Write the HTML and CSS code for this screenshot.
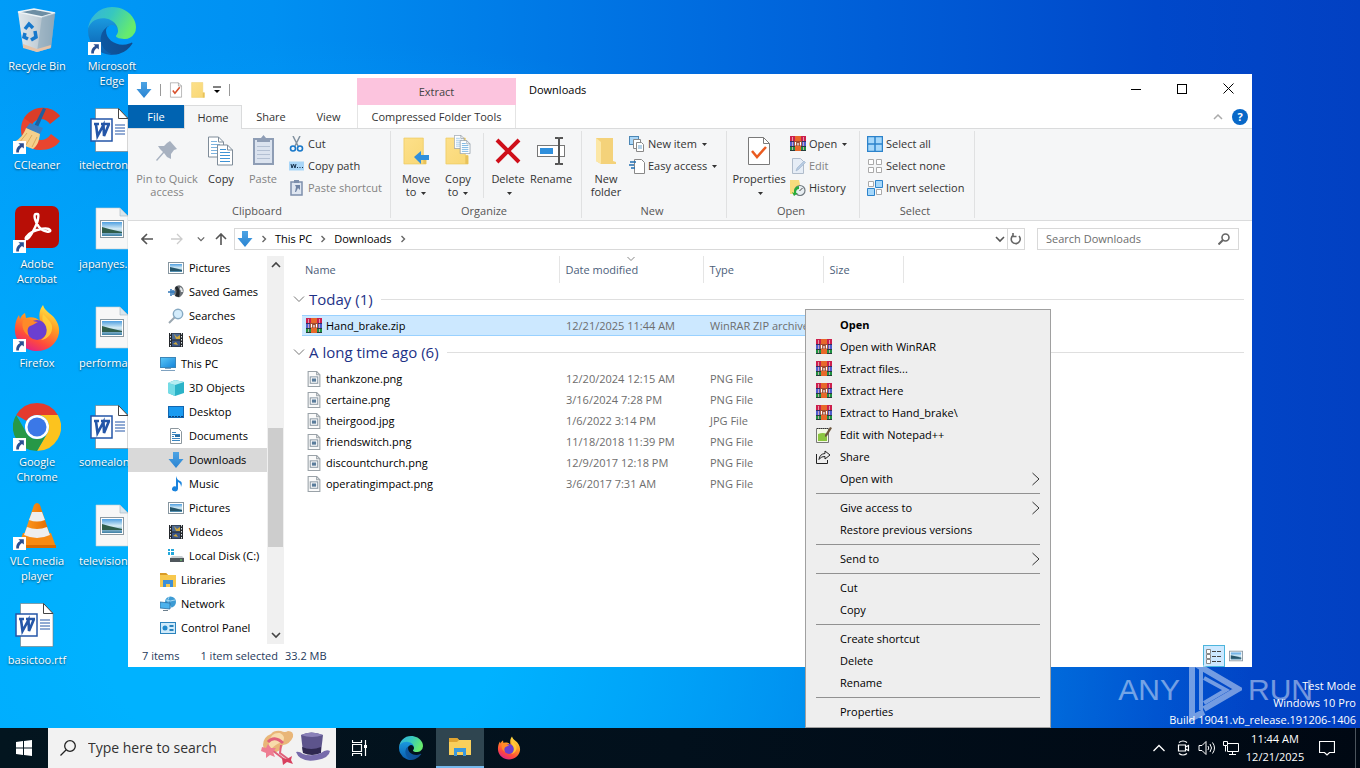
FILE: index.html
```html
<!DOCTYPE html>
<html lang="en">

<head>
    <title>Downloads</title>
    <meta charset="utf-8" />
    <meta name="viewport" content="width=device-width,initial-scale=1" />
    <link rel="stylesheet" href="styles.css">
</head>

<body>

    <!-- icon sprite -->
    <svg class="sprite" aria-hidden="true">
        <defs>
            <linearGradient id="gEdge1" x1="0" y1="0" x2="1" y2="0"><stop offset="0" stop-color="#0c59a4" /><stop offset="1" stop-color="#114a8b" /></linearGradient>
            <linearGradient id="gEdge2" x1="0" y1="0" x2="0" y2="1"><stop offset="0" stop-color="#1b9de2" /><stop offset="1" stop-color="#0a5cad" /></linearGradient>
            <linearGradient id="gEdge3" x1="0" y1="0" x2="1" y2="0.4"><stop offset="0" stop-color="#35b1e0" /><stop offset="0.5" stop-color="#36c7c0" /><stop offset="1" stop-color="#66eb6e" /></linearGradient>
            <linearGradient id="gFox" x1="0.8" y1="0" x2="0.3" y2="1"><stop offset="0" stop-color="#fff04a" /><stop offset="0.4" stop-color="#ff9a24" /><stop offset="0.75" stop-color="#ff4a3c" /><stop offset="1" stop-color="#e0208a" /></linearGradient>
            <linearGradient id="gFolder" x1="0" y1="0" x2="1" y2="1"><stop offset="0" stop-color="#fde08a" /><stop offset="1" stop-color="#f8d775" /></linearGradient>
            <linearGradient id="gSky" x1="0" y1="0" x2="0" y2="1"><stop offset="0" stop-color="#4f9fe0" /><stop offset="0.5" stop-color="#d8edf5" /><stop offset="1" stop-color="#3c7fa5" /></linearGradient>
            <linearGradient id="gScreen" x1="0" y1="0" x2="1" y2="1"><stop offset="0" stop-color="#5cc8f8" /><stop offset="1" stop-color="#1583d8" /></linearGradient>
            <linearGradient id="gBin" x1="0" y1="0" x2="1" y2="0"><stop offset="0" stop-color="#dfe7ec" /><stop offset="0.5" stop-color="#c5d0d8" /><stop offset="1" stop-color="#8fa7b8" /></linearGradient>
            <linearGradient id="gDown" x1="0" y1="0" x2="0" y2="1"><stop offset="0" stop-color="#4da3e4" /><stop offset="1" stop-color="#2a84d2" /></linearGradient>
            <linearGradient id="gCone" x1="0" y1="0" x2="1" y2="0"><stop offset="0" stop-color="#ff9a1f" /><stop offset="1" stop-color="#e36a00" /></linearGradient>
        </defs>

        <symbol id="shortcut" viewBox="0 0 12 12">
            <rect width="12" height="12" fill="#fff" />
            <path d="M5 2h5v5L8.300 5.500C6.500 6.700 5.500 8 5.400 10.500H3C2.600 7.500 4 5 6.600 3.800z" fill="#2a4f92" />
        </symbol>
        <symbol id="bin" viewBox="0 0 48 48">
            <path d="M5 5l16-3 21 4-4 35-14 4-14-5z" fill="url(#gBin)" />
            <path d="M5 5l16-3 21 4-13 4z" fill="#6d8ea4" stroke="#eef4f7" stroke-width="1.500" />
            <path d="M29 10l13-4-4 35-14 4z" fill="#8ca8ba" opacity=".6" />
            <path d="M10 37l14 5 14-4-.4 3L24 45 10 41z" fill="#e5c3a8" />
            <g fill="none" stroke="#1678cc" stroke-width="3.500"><path d="M12 22l4-5 4 4M22 24l1 6-5 3M15 32l-4-2 1-4" /></g>
        </symbol>
        <symbol id="edge" viewBox="0 0 256 256">
            <g transform="translate(-4.630 -4.920)">
                <path d="M235.680 195.090a93.730 93.730 0 0 1-10.540 4.710 101.870 101.870 0 0 1-35.900 6.460c-47.320 0-88.540-32.550-88.540-74.320a31.480 31.480 0 0 1 16.430-27.310c-42.800 1.800-53.800 46.400-53.800 72.530 0 73.880 68.090 81.370 82.760 81.370 7.910 0 19.840-2.300 27-4.560l1.310-.44a128.340 128.340 0 0 0 66.600-52.800 4 4 0 0 0-5.320-5.640z" fill="url(#gEdge1)" />
                <path d="M110.340 246.340A79.200 79.200 0 0 1 87.600 225a80.720 80.720 0 0 1 29.530-120c3.120-1.470 8.450-4.130 15.540-4a32.350 32.350 0 0 1 25.690 13 31.880 31.880 0 0 1 6.360 18.660c0-.21 24.460-79.600-80-79.600-43.900 0-80 41.660-80 78.210a130.150 130.150 0 0 0 12.110 56 128 128 0 0 0 156.380 67.110 75.550 75.550 0 0 1-62.780-8z" fill="url(#gEdge2)" />
                <path d="M156.940 153.780c-.81 1.050-3.300 2.500-3.300 5.660 0 2.610 1.700 5.120 4.720 7.230 14.380 10 41.490 8.680 41.560 8.680a59.560 59.560 0 0 0 30.270-8.350 61.380 61.380 0 0 0 30.430-52.880c.26-22.410-8-37.310-11.340-43.910C228.090 28.760 182.350 4.920 132.610 4.920A128 128 0 0 0 4.630 131.100c.48-36.540 36.800-66.050 80-66.050 3.500 0 23.460.34 42 10.070 16.340 8.580 24.900 18.940 30.850 29.210 6.180 10.670 7.280 24.150 7.280 29.520 0 5.370-2.740 13.330-7.820 19.930z" fill="url(#gEdge3)" />
            </g>
        </symbol>
        <symbol id="ccleaner" viewBox="0 0 48 48">
            <path d="M47 10C41 2 31 0 22 3 12 7 8 15 8 24c0 12 8 20 19 20 9 0 16-3 20-9l-9-7c-3 4-6 6-10 6-6 0-10-4-10-10s4-11 10-11c4 0 7 2 9 5z" fill="#e8452f" />
            <path d="M47 10C41 2 31 0 22 3c-5 2-8 5-11 9l8 6c2-3 5-5 9-5s7 2 9 5z" fill="#c8321f" opacity=".4" />
            <path d="M30 2l3 1-8 18-4-1z" fill="#1f5f9e" />
            <path d="M17 17l13 5-3 6-14-6z" fill="#3d7fc2" />
            <path d="M13 22l14 6c-1 8-3 12-7 15L1 36c6-3 10-8 12-14z" fill="#f5d08c" />
            <path d="M14 27L6 37M19 29l-6 10M24 31l-5 10" stroke="#dba95a" fill="none" />
        </symbol>
        <symbol id="acrobat" viewBox="0 0 48 48">
            <rect x="2" y="1" width="44" height="42" rx="7" fill="#b80e06" />
            <path d="M23 9c-3 0-1 8 3 13s13 6 11 3-12-1-18 2-8 8-5 7 10-14 11-20 0-5-2-5z" fill="none" stroke="#fff" stroke-width="2.400" />
        </symbol>
        <symbol id="firefox" viewBox="0 0 48 48">
            <path d="M30 1c1 4 4 6 6 8 7 5 11 12 10 20-2 11-11 18-22 18S3 39 2 28C1.500 22 3 15 6 11l1 4c1-3 3-5 5-6l1 5c6-2 11 0 14 3-1-6-1-11 3-16z" fill="url(#gFox)" />
            <circle cx="24" cy="26" r="10" fill="#6b3fd0" />
            <path d="M10 16c6-3 9 2 15 2-3 1-4 3-8 4-3 2-3 6-1 10-5-3-8-9-6-16z" fill="#ff8a28" />
            <path d="M31 19c4 5 4 13-3 17 7-1 12-7 11-14-1-4-4-7-9-12-1 4-1 6 1 9z" fill="#ffd23c" opacity=".8" />
        </symbol>
        <symbol id="chrome" viewBox="0 0 48 48">
            <path d="M24 0a24 24 0 0 1 20.800 12H24a12 12 0 0 0-10.400 6L3.200 12A24 24 0 0 1 24 0z" fill="#e33b2e" />
            <path d="M44.800 12A24 24 0 0 1 24 48l10.400-18A12 12 0 0 0 24 12z" fill="#fcc31e" />
            <path d="M24 48A24 24 0 0 1 3.200 12l10.400 18a12 12 0 0 0 20.800 0z" fill="#279847" />
            <circle cx="24" cy="24" r="12" fill="#fff" /><circle cx="24" cy="24" r="9.500" fill="#3b78e7" />
        </symbol>
        <symbol id="vlc" viewBox="0 0 48 48">
            <path d="M10 31h28l5 14H5z" fill="#f78a12" /><path d="M5 43h38v3H5z" fill="#d96a00" />
            <path d="M21 3q3-4 6 0l10 30q-13 6-26 0z" fill="url(#gCone)" />
            <path d="M19 10h10l3 8q-8 3-16 0zM14 25q10 4 20 0l3 8q-13 6-26 0z" fill="#eee" />
        </symbol>
        <symbol id="word" viewBox="0 0 48 48">
            <path d="M7.500 2.500h23l9.500 10v33H7.500z" fill="#fff" stroke="#777" stroke-width=".6" />
            <path d="M30.500 2.500v10H40z" fill="#fff" stroke="#444" />
            <path d="M27 19h10M27 22h10M27 25h10M27 28h10" stroke="#2456a8" />
            <rect x="3" y="13" width="21" height="22" fill="#fff" stroke="#2456a8" stroke-width="1.500" />
            <path d="M6 18h5M13 18h9M8 18.500l1.500 11.500 6-11 .5 11 5-12" fill="none" stroke="#2456a8" stroke-width="2.600" />
        </symbol>
        <symbol id="imgdoc" viewBox="0 0 48 48">
            <path d="M8 3h24l8 8v33H8z" fill="#f7f7f7" stroke="#c3ccd2" stroke-width=".6" />
            <path d="M32 3v8h8z" fill="#d7e6ee" stroke="#a9b7bf" stroke-width=".6" />
            <rect x="12.500" y="15.500" width="23" height="17" fill="#fff" stroke="#8b98a0" />
            <rect x="14" y="17" width="20" height="14" fill="url(#gSky)" />
            <path d="M14 22q6 2 20 5v1H14z" fill="#2f5d4b" />
        </symbol>

        <symbol id="down" viewBox="0 0 16 16"><path d="M5 0h6v7h4.500L8 16 .5 7H5z" fill="url(#gDown)" /></symbol>
        <symbol id="rar" viewBox="0 0 16 16">
            <path d="M0 0h16v5H0z" fill="#cc1f4c" /><path d="M0 5h16v5H0z" fill="#4f5ccc" /><path d="M0 10h16v5H0z" fill="#1f9040" />
            <path d="M0 5.500h16M0 10.500h16M0 14.500h16" stroke="#2a1a3a" opacity=".7" />
            <path d="M2.500 1v4M13.500 1v4M2.500 6v4M13.500 6v4M2.500 11v3M13.500 11v3" stroke="#e9b6c4" stroke-width=".8" />
            <path d="M5 0h6v15H5z" fill="#e8682a" /><path d="M4 5h8v5H4z" fill="#a04a30" />
            <path d="M5.500 6v3.500M8 7v2.500M10.500 6v3.500" stroke="#fff" stroke-width="1.200" />
        </symbol>
        <symbol id="pic" viewBox="0 0 16 16">
            <rect x=".5" y="2.500" width="15" height="11" fill="#fff" stroke="#8796a0" /><rect x="2" y="4" width="12" height="8" fill="url(#gSky)" /><path d="M2 7q5 1 12 3v1H2z" fill="#27566b" />
        </symbol>
        <symbol id="games" viewBox="0 0 16 16">
            <path d="M7 3q5-4 8 1 2 5-3 9-4 1-6-3z" fill="#6b7176" /><path d="M9 2q4 4 2 11l-4-1q3-5 0-8z" fill="#23282c" /><path d="M12 4q2 1 2 4" stroke="#e3e6e8" stroke-width="2" fill="none" /><path d="M0 8h7M3 5v7M5 6v5" stroke="#3177b8" stroke-width="1.500" />
        </symbol>
        <symbol id="lens" viewBox="0 0 16 16"><path d="M1 15l6-6" stroke="#9aa7b0" stroke-width="2" /><circle cx="10" cy="6" r="4.700" fill="#d4ecfb" stroke="#86a9c2" stroke-width="1.400" /></symbol>
        <symbol id="video" viewBox="0 0 16 16">
            <rect x="1" y="1" width="14" height="14" fill="#23272b" /><rect x="4" y="1.500" width="8" height="6" fill="#4c6a94" /><rect x="4" y="8.500" width="8" height="6" fill="#3a5484" /><path d="M6 2l3 3 3-2v4H8zM5 12l3-2 2 3z" fill="#cfa83c" /><path d="M2.500 1v14M13.500 1v14" stroke="#dfe4e8" stroke-dasharray="1.500 1.500" />
        </symbol>
        <symbol id="pc" viewBox="0 0 16 16"><rect x=".5" y="1.500" width="15" height="10" fill="url(#gScreen)" stroke="#3b86b8" /><path d="M5 12.500h6M1 14.500h14" stroke="#7fa2c0" /></symbol>
        <symbol id="cube" viewBox="0 0 16 16"><path d="M0 3l7-3 9 2v11l-9 3-7-3z" fill="#2bb3c8" /><path d="M0 3l7 2v11l-7-3z" fill="#74dce6" /><path d="M0 3l7-3 9 2-9 3z" fill="#b5eef2" /></symbol>
        <symbol id="desk" viewBox="0 0 16 16"><rect x=".5" y="2.500" width="15" height="11" fill="#1a9af0" stroke="#1266b0" /><path d="M1 12.500h14" stroke="#0d3f78" stroke-dasharray="2 1" /></symbol>
        <symbol id="docs" viewBox="0 0 16 16"><path d="M2.500.5h8l3 3v12h-11z" fill="#fff" stroke="#8c979e" /><path d="M4 4.500h4M4 6.500h8M4 10.500h8M4 12.500h8M4 8.500h2" stroke="#3a86c0" /><path d="M7 8h5" stroke="#2c6ea4" stroke-width="2" /></symbol>
        <symbol id="music" viewBox="0 0 16 16"><path d="M8 0q1 4 4 5t1 6q0-4-3-5v7a3 2.500 0 1 1-2-2.500z" fill="#1a83dd" /></symbol>
        <symbol id="disk" viewBox="0 0 16 16"><path d="M0 1h2v2H0zM3 1h3v2H3zM0 4h2v3H0zM3 4h3v3H3z" fill="#24a8dc" /><path d="M4 8h10l2 2H2z" fill="#c9ced2" /><path d="M2 10h14v4H2z" fill="#50575d" /><path d="M12 12h2" stroke="#6ee36c" /></symbol>
        <symbol id="lib" viewBox="0 0 16 16"><path d="M0 1h6l2 2h8v12H0z" fill="#f7c84e" /><path d="M0 1h6l2 2H0z" fill="#d99b27" /><path d="M3 15V8h10v7h-3v-3H6v3z" fill="#3c8fd8" /></symbol>
        <symbol id="net" viewBox="0 0 16 16"><circle cx="10.500" cy="6" r="5.500" fill="#3d9bd4" /><path d="M6 4q4 2 9 0M9 1q-3 5 2 10" stroke="#a5d8f2" fill="none" /><path d="M0 6l10 1v6L0 12z" fill="#4db2ec" stroke="#2b6da1" stroke-width=".8" /><path d="M3 14.500h5" stroke="#6c7f8d" /></symbol>
        <symbol id="panel" viewBox="0 0 16 16"><rect x=".5" y="2.500" width="15" height="11" fill="#cfeafa" stroke="#2b83bd" /><circle cx="5" cy="8" r="2.500" fill="#2189cc" /><path d="M9.500 6h4M9.500 10h4" stroke="#2b83bd" stroke-width="2" /></symbol>
        <symbol id="imgfile" viewBox="0 0 12 15"><path d="M.5.500h8l3 3v11H.5z" fill="#fafafa" stroke="#9aa2a8" /><path d="M8.500.500v3h3" fill="none" stroke="#9aa2a8" /><rect x="2.500" y="5.500" width="7" height="6" fill="#fff" stroke="#8c9aa6" /><path d="M4 7h4v3H4z" fill="#5a7c9b" /></symbol>
        <symbol id="check" viewBox="0 0 24 30"><path d="M1.500 1.500h15l6 6v21h-21z" fill="#fff" stroke="#7a7a7a" /><path d="M16.500 1.500v6h6" fill="none" stroke="#7a7a7a" /></symbol>
        <symbol id="folder" viewBox="0 0 26 30"><path d="M1 1h21v19h3v9H1z" fill="url(#gFolder)" stroke="#edca62" stroke-width=".8" /><path d="M22 20v9h3v-9z" fill="#e8c25a" /></symbol>
        <symbol id="pages" viewBox="0 0 26 29"><path d="M.5.500h10l5 5v15H.5z" fill="#fff" stroke="#7f8c99" /><path d="M10.500.500v5h5" fill="none" stroke="#7f8c99" /><path d="M3 5h6M3 8h9M3 11h9M3 14h9M3 17h9" stroke="#7db3de" /><path d="M9.500 8.500h10l5 5v15h-15z" fill="#fff" stroke="#7f8c99" /><path d="M19.500 8.500v5h5" fill="none" stroke="#7f8c99" /><path d="M12 13h6M12 16h10M12 19h10M12 22h10M12 25h10" stroke="#3f93d4" /></symbol>
        <symbol id="chevright" viewBox="0 0 8 8"><path d="M2.500 1l3 3-3 3" fill="none" stroke="#666" stroke-width="1.400" /></symbol>
        <symbol id="chevdown" viewBox="0 0 10 10"><path d="M1 3l4 4 4-4" fill="none" stroke="currentColor" stroke-width="1.600" /></symbol>
        <symbol id="caret" viewBox="0 0 5 3"><path d="M0 0h5L2.500 3z" fill="currentColor" /></symbol>
        <symbol id="more" viewBox="0 0 8 14"><path d="M.5 1l6.500 6-6.500 6" fill="none" stroke="#333" /></symbol>
    </svg>

    <div class="desktop">
        <div class="desktopIcons">
            <a href="#"><svg class="icon48"><use href="#bin" /></svg><span>Recycle Bin</span></a>
            <a href="#"><svg class="icon48"><use href="#ccleaner" /><use href="#shortcut" y="35" width="13" height="13" /></svg><span>CCleaner</span></a>
            <a href="#"><svg class="icon48"><use href="#acrobat" /><use href="#shortcut" y="35" width="13" height="13" /></svg><span>Adobe Acrobat</span></a>
            <a href="#"><svg class="icon48"><use href="#firefox" /><use href="#shortcut" y="35" width="13" height="13" /></svg><span>Firefox</span></a>
            <a href="#"><svg class="icon48"><use href="#chrome" /><use href="#shortcut" y="35" width="13" height="13" /></svg><span>Google Chrome</span></a>
            <a href="#"><svg class="icon48"><use href="#vlc" /><use href="#shortcut" y="35" width="13" height="13" /></svg><span>VLC media player</span></a>
            <a href="#"><svg class="icon48"><use href="#word" /></svg><span>basictoo.rtf</span></a>
            <a href="#"><svg class="icon48"><use href="#edge" /><use href="#shortcut" y="35" width="13" height="13" /></svg><span>Microsoft Edge</span></a>
            <a href="#" class="longName"><svg class="icon48"><use href="#word" /></svg><span>itelectron</span></a>
            <a href="#" class="longName"><svg class="icon48"><use href="#imgdoc" /></svg><span>japanyes.</span></a>
            <a href="#" class="longName"><svg class="icon48"><use href="#imgdoc" /></svg><span>performa</span></a>
            <a href="#" class="longName"><svg class="icon48"><use href="#word" /></svg><span>somealon</span></a>
            <a href="#" class="longName"><svg class="icon48"><use href="#imgdoc" /></svg><span>television</span></a>
        </div>

        <div class="buildInfo">
            <p>Test Mode</p>
            <p>Windows 10 Pro</p>
            <p>Build 19041.vb_release.191206-1406</p>
        </div>

        <!-- explorer window -->
        <div class="window">
            <div class="titleBar">
                <div class="quickAccess">
                    <svg class="icon16"><use href="#down" /></svg>
                    <i></i>
                    <button aria-label="Properties"><svg width="14" height="16" viewBox="0 0 24 30"><use href="#check" width="24" height="30" /><path d="M6 16l4 5 9-11" fill="none" stroke="#d8502c" stroke-width="3" /></svg></button>
                    <button aria-label="New folder"><svg width="14" height="16"><use href="#folder" /></svg></button>
                    <button aria-label="Customize"><svg width="8" height="8" viewBox="0 0 8 8"><path d="M0 1h8" stroke="#000" /><path d="M1 4h6L4 7z" /></svg></button>
                    <i></i>
                </div>
                <div class="contextTab">Extract</div>
                <div class="title">Downloads</div>
                <div class="controls">
                    <button aria-label="Minimize"><svg width="10" height="10"><path d="M0 5.500h10" stroke="#000" /></svg></button>
                    <button aria-label="Maximize"><svg width="10" height="10"><rect x=".5" y=".5" width="9" height="9" fill="none" stroke="#000" /></svg></button>
                    <button aria-label="Close"><svg width="11" height="11"><path d="M.5.500l10 10M10.500.500l-10 10" stroke="#000" /></svg></button>
                </div>
            </div>

            <div class="tabs">
                <button class="file">File</button>
                <button class="home">Home</button>
                <button>Share</button>
                <button class="view">View</button>
                <button class="tools">Compressed Folder Tools</button>
                <div class="help">
                    <svg width="10" height="10" viewBox="0 0 10 10"><path d="M1 7l4-4 4 4" fill="none" stroke="#aaa" stroke-width="1.500" /></svg>
                    <button aria-label="Help">?</button>
                </div>
            </div>

            <div class="ribbon">
                <div class="group clipboard">
                    <div class="tools">
                        <button class="big pin off"><svg width="32" height="32" viewBox="0 0 32 32"><path d="M19 6l7 8-3 1-3 4v5l-4-2-3-4-7 8-1-1 7-8-3-3-2-3h6l3-3z" fill="#a7b1c0" /></svg><span>Pin to Quick access</span></button>
                        <button class="big copy"><svg width="26" height="32"><use href="#pages" /></svg><span>Copy</span></button>
                        <button class="big paste off"><svg width="24" height="32" viewBox="0 0 24 32"><rect x="3" y="4" width="19" height="25" fill="#dbe3ef" stroke="#8e9db5" stroke-width="2" /><path d="M6 3h4l2.500-3L15 3h4v4H6z" fill="#8e9db5" /><path d="M6 11.500h13M6 15.500h13M6 19.500h13M6 23.500h13" stroke="#b3c0d3" /></svg><span>Paste</span></button>
                        <div class="col">
                            <button><svg class="icon16" viewBox="0 0 16 16"><path d="M4 0l5 10M11 0L6 10" stroke="#8292a0" stroke-width="1.500" /><g fill="none" stroke="#1979ca" stroke-width="1.600"><circle cx="4" cy="12.500" r="2.500" /><circle cx="11" cy="12.500" r="2.500" /></g></svg>Cut</button>
                            <button><svg class="icon16" viewBox="0 0 16 16"><rect x="0" y="3.500" width="15" height="9" fill="#a9d6f8" /><path d="M2 6l1 4 1.500-4L6 10l1-4M8 9.500h1M10.500 9.500h1M13 9.500h1" fill="none" stroke="#16304c" /></svg>Copy path</button>
                            <button class="off"><svg class="icon16" viewBox="0 0 16 16"><rect x="2" y="2" width="11" height="13" fill="#dfe6f1" stroke="#7d8fac" stroke-width="1.500" /><path d="M5 0h5v3H5z" fill="#7d8fac" /><path d="M6 5h5v5L9 8l-2 4H6l1-5z" fill="#6f83a4" /></svg>Paste shortcut</button>
                        </div>
                    </div>
                    <h2>Clipboard</h2>
                </div>
                <div class="group organize">
                    <div class="tools">
                        <button class="big moveTo"><svg width="28" height="32" viewBox="0 0 28 32"><use href="#folder" x="1" y="1" width="24" height="30" /><path d="M12 22l7-6v4h8v5h-8v4z" fill="#2f8fdc" /></svg><span>Move<br>to <svg class="caret"><use href="#caret" /></svg></span></button>
                        <button class="big moveTo"><svg width="28" height="32" viewBox="0 0 28 32"><use href="#folder" x="1" y="1" width="24" height="30" /><use href="#pages" x="10" width="17" height="19" /></svg><span>Copy<br>to <svg class="caret"><use href="#caret" /></svg></span></button>
                        <i></i>
                        <button class="big delete"><svg width="26" height="32" viewBox="0 0 26 32"><path d="M2 5l22 22M24 5L2 27" stroke="#cf0f1a" stroke-width="4" /></svg><span>Delete<br><svg class="caret"><use href="#caret" /></svg></span></button>
                        <button class="big rename"><svg width="28" height="32" viewBox="0 0 28 32"><rect x=".5" y="10.500" width="27" height="11" fill="#fff" stroke="#777" /><rect x="3" y="13" width="13" height="6" fill="#2f8fdc" /><path d="M18 3h3q1 0 1 1v24q0 1-1 1h-3M26 3h-3q-1 0-1 1M26 29h-3q-1 0-1-1" fill="none" stroke="#555" stroke-width="2" /></svg><span>Rename</span></button>
                    </div>
                    <h2>Organize</h2>
                </div>
                <div class="group new">
                    <div class="tools">
                        <button class="big newFolder"><svg width="20" height="32" viewBox="0 0 20 32"><path d="M0 3h17v23l3 1v2H5l-5-3z" fill="#f4d27a" /><path d="M0 3l5 4v22l-5-3z" fill="#fce7a6" /></svg><span>New folder</span></button>
                        <div class="col">
                            <button><svg class="icon16" viewBox="0 0 16 16"><rect x=".5" y=".5" width="9" height="8" fill="#a9d6f8" stroke="#4c87b5" /><path d="M4.500 3.500h7v9h-7z" fill="#fff" stroke="#888" /><path d="M7.500 6.500h5l2 2v7h-7z" fill="#fff" stroke="#888" /><path d="M9 10h4M9 12h4" stroke="#6ba3cf" /></svg>New item <svg class="caret"><use href="#caret" /></svg></button>
                            <button><svg class="icon16" viewBox="0 0 16 16"><path d="M5.500 1.500h7l3 3v11h-10z" fill="#fff" stroke="#888" /><path d="M1 4h6M0 7h5M2 10h4" stroke="#2370b4" stroke-width="1.500" /></svg>Easy access <svg class="caret"><use href="#caret" /></svg></button>
                        </div>
                    </div>
                    <h2>New</h2>
                </div>
                <div class="group open">
                    <div class="tools">
                        <button class="big props"><svg width="24" height="32" viewBox="0 0 24 32"><use href="#check" y="1" width="24" height="30" /><path d="M5 16l5 6 9-10" fill="none" stroke="#ea5b20" stroke-width="2.500" /></svg><span>Properties<br><svg class="caret"><use href="#caret" /></svg></span></button>
                        <div class="col">
                            <button><svg class="icon16"><use href="#rar" /></svg>Open <svg class="caret"><use href="#caret" /></svg></button>
                            <button class="off"><svg class="icon16" viewBox="0 0 16 16"><path d="M2.500.500h8l3 3v12h-11z" fill="#e6edf6" stroke="#b0bccb" /><path d="M6 13l1-3 7-7 1.500 1.500-7 7z" fill="#b7cbe2" stroke="#9fb3cb" stroke-width=".6" /></svg>Edit</button>
                            <button><svg class="icon16" viewBox="0 0 16 16"><path d="M0 0h9l2 9v5H0z" fill="#f7dc7d" /><circle cx="10" cy="10.500" r="5" fill="#e8eef2" stroke="#717a81" stroke-width="1.200" /><path d="M9.500 11l3-3" stroke="#444" /><path d="M9 6q-6 1-5 7l-2-1 2 4 4-3-2 0q0-4 3-4z" fill="#29ab3c" /></svg>History</button>
                        </div>
                    </div>
                    <h2>Open</h2>
                </div>
                <div class="group select">
                    <div class="tools">
                        <div class="col">
                            <button><svg class="icon16" viewBox="0 0 16 16"><path d="M.5.500h15v15H.5zM8 0v16M0 8h16" fill="#a6d8fb" stroke="#2c83cb" stroke-width="1.500" /></svg>Select all</button>
                            <button><svg class="icon16" viewBox="0 0 16 16"><path d="M1.500 1.500h5v5h-5zM9.500 1.500h5v5h-5zM1.500 9.500h5v5h-5zM9.500 9.500h5v5h-5z" fill="#fff" stroke="#aaa" /></svg>Select none</button>
                            <button><svg class="icon16" viewBox="0 0 16 16"><path d="M1.500 1.500h5v5h-5zM9.500 9.500h5v5h-5z" fill="#fff" stroke="#aaa" /><path d="M8.500.500h7v7h-7zM.5 8.500h7v7h-7z" fill="#a6d8fb" stroke="#2c83cb" /></svg>Invert selection</button>
                        </div>
                    </div>
                    <h2>Select</h2>
                </div>
            </div>

            <div class="addressRow">
                <button aria-label="Back"><svg width="12" height="12" viewBox="0 0 12 12"><path d="M12 6H1M6 1L1 6l5 5" fill="none" stroke="#555" stroke-width="1.600" /></svg></button>
                <button aria-label="Forward"><svg width="12" height="12" viewBox="0 0 12 12"><path d="M0 6h11M6 1l5 5-5 5" fill="none" stroke="#ccc" stroke-width="1.300" /></svg></button>
                <button class="recent" aria-label="Recent locations"><svg width="8" height="8"><use href="#chevdown" /></svg></button>
                <button class="up" aria-label="Up"><svg width="12" height="12" viewBox="0 0 12 12"><path d="M6 12V1M1 6l5-5 5 5" fill="none" stroke="#555" stroke-width="1.600" /></svg></button>
                <div class="address">
                    <svg class="icon16"><use href="#down" /></svg>
                    <svg width="8" height="8"><use href="#chevright" /></svg>
                    <button>This PC</button>
                    <svg width="8" height="8"><use href="#chevright" /></svg>
                    <button>Downloads</button>
                    <svg width="8" height="8"><use href="#chevright" /></svg>
                    <button class="history" aria-label="Previous locations"><svg width="10" height="10"><use href="#chevdown" /></svg></button>
                    <button class="refresh" aria-label="Refresh"><svg width="12" height="12" viewBox="0 0 12 12"><path d="M3 2.500A4.500 4.500 0 1 0 9 3M3 0v3.500h3.500" fill="none" stroke="#666" stroke-width="1.600" /></svg></button>
                </div>
                <div class="search">
                    <input type="search" placeholder="Search Downloads" aria-label="Search Downloads" />
                    <svg width="12" height="12" viewBox="0 0 12 12"><circle cx="7.500" cy="4.500" r="3.500" fill="none" stroke="#666" stroke-width="1.600" /><path d="M5 7l-4.500 4.500" stroke="#666" stroke-width="2" /></svg>
                </div>
            </div>

            <div class="content">
                <div class="nav">
                    <ul>
                        <li class="sub"><a href="#"><svg class="icon16"><use href="#pic" /></svg>Pictures</a></li>
                        <li class="sub"><a href="#"><svg class="icon16"><use href="#games" /></svg>Saved Games</a></li>
                        <li class="sub"><a href="#"><svg class="icon16"><use href="#lens" /></svg>Searches</a></li>
                        <li class="sub"><a href="#"><svg class="icon16"><use href="#video" /></svg>Videos</a></li>
                        <li><a href="#"><svg class="icon16"><use href="#pc" /></svg>This PC</a></li>
                        <li class="sub"><a href="#"><svg class="icon16"><use href="#cube" /></svg>3D Objects</a></li>
                        <li class="sub"><a href="#"><svg class="icon16"><use href="#desk" /></svg>Desktop</a></li>
                        <li class="sub"><a href="#"><svg class="icon16"><use href="#docs" /></svg>Documents</a></li>
                        <li class="sub current"><a href="#"><svg class="icon16"><use href="#down" /></svg>Downloads</a></li>
                        <li class="sub"><a href="#"><svg class="icon16"><use href="#music" /></svg>Music</a></li>
                        <li class="sub"><a href="#"><svg class="icon16"><use href="#pic" /></svg>Pictures</a></li>
                        <li class="sub"><a href="#"><svg class="icon16"><use href="#video" /></svg>Videos</a></li>
                        <li class="sub"><a href="#"><svg class="icon16"><use href="#disk" /></svg>Local Disk (C:)</a></li>
                        <li><a href="#"><svg class="icon16"><use href="#lib" /></svg>Libraries</a></li>
                        <li><a href="#"><svg class="icon16"><use href="#net" /></svg>Network</a></li>
                        <li><a href="#"><svg class="icon16"><use href="#panel" /></svg>Control Panel</a></li>
                    </ul>
                    <div class="scrollbar">
                        <svg width="10" height="10" viewBox="0 0 10 10"><path d="M1 7l4-4 4 4" fill="none" stroke="#444" stroke-width="1.600" /></svg>
                        <div class="before"></div>
                        <div class="thumb"></div>
                        <div class="after"></div>
                        <svg width="10" height="10"><use href="#chevdown" /></svg>
                    </div>
                </div>

                <div class="files">
                    <table>
                        <colgroup><col class="cEdge"><col class="cName"><col class="cDate"><col class="cType"><col class="cSize"><col></colgroup>
                        <thead>
                            <tr><th></th><th class="name">Name</th><th class="sorted">Date modified<svg width="10" height="10" viewBox="0 0 10 10"><path d="M1.500 3L5 6.500 8.500 3" fill="none" stroke="#888" /></svg></th><th>Type</th><th>Size</th><th class="last"></th></tr>
                        </thead>
                        <tbody>
                            <tr class="groupRow"><td colspan="6"><div><svg width="12" height="12" viewBox="0 0 12 12"><path d="M1 3.500l5 5 5-5" fill="none" stroke="#777" /></svg>Today (1)<hr></div></td></tr>
                            <tr class="selected"><td></td><td class="name"><div><svg class="icon16"><use href="#rar" /></svg>Hand_brake.zip</div></td><td>12/21/2025 11:44 AM</td><td>WinRAR ZIP archive</td><td></td><td class="last"></td></tr>
                        </tbody>
                        <tbody>
                            <tr class="groupRow"><td colspan="6"><div><svg width="12" height="12" viewBox="0 0 12 12"><path d="M1 3.500l5 5 5-5" fill="none" stroke="#777" /></svg>A long time ago (6)<hr></div></td></tr>
                            <tr><td></td><td class="name"><div><svg class="icon16"><use href="#imgfile" /></svg>thankzone.png</div></td><td>12/20/2024 12:15 AM</td><td>PNG File</td><td></td><td></td></tr>
                            <tr><td></td><td class="name"><div><svg class="icon16"><use href="#imgfile" /></svg>certaine.png</div></td><td>3/16/2024 7:28 PM</td><td>PNG File</td><td></td><td></td></tr>
                            <tr><td></td><td class="name"><div><svg class="icon16"><use href="#imgfile" /></svg>theirgood.jpg</div></td><td>1/6/2022 3:14 PM</td><td>JPG File</td><td></td><td></td></tr>
                            <tr><td></td><td class="name"><div><svg class="icon16"><use href="#imgfile" /></svg>friendswitch.png</div></td><td>11/18/2018 11:39 PM</td><td>PNG File</td><td></td><td></td></tr>
                            <tr><td></td><td class="name"><div><svg class="icon16"><use href="#imgfile" /></svg>discountchurch.png</div></td><td>12/9/2017 12:18 PM</td><td>PNG File</td><td></td><td></td></tr>
                            <tr><td></td><td class="name"><div><svg class="icon16"><use href="#imgfile" /></svg>operatingimpact.png</div></td><td>3/6/2017 7:31 AM</td><td>PNG File</td><td></td><td></td></tr>
                        </tbody>
                    </table>
                </div>
            </div>

            <div class="status">
                <span>7 items</span>
                <span>1 item selected</span>
                <span class="size">33.2 MB</span>
                <div class="views">
                    <button class="on" aria-label="Details"><svg width="16" height="16" viewBox="0 0 16 16"><path d="M.5 1.500h4v4h-4zM.5 6.500h4v4h-4zM.5 11.500h4v4h-4z" fill="#fff" stroke="#888" /><path d="M6 3.500h10M6 8.500h10M6 13.500h10" stroke="#444" stroke-dasharray="4 1" /></svg></button>
                    <button aria-label="Large icons"><svg width="14" height="14"><use href="#pic" /></svg></button>
                </div>
            </div>
        </div>

        <!-- right click menu -->
        <div class="menu" role="menu">
            <button role="menuitem" class="default"><span></span>Open</button>
            <button role="menuitem"><svg class="icon16"><use href="#rar" /></svg>Open with WinRAR</button>
            <button role="menuitem"><svg class="icon16"><use href="#rar" /></svg>Extract files...</button>
            <button role="menuitem"><svg class="icon16"><use href="#rar" /></svg>Extract Here</button>
            <button role="menuitem"><svg class="icon16"><use href="#rar" /></svg>Extract to Hand_brake\</button>
            <button role="menuitem"><svg class="icon16" viewBox="0 0 16 16"><path d="M.5 1.500h12v14H.5z" fill="#f4f8e6" stroke="#777" /><path d="M2 7q5-2 9 0v7H2z" fill="#8bc53f" /><path d="M1 1.500h11" stroke="#333" stroke-dasharray="1 1" /><path d="M9 8l5-8 2 1-5 8-2 1z" fill="#6d563c" /></svg>Edit with Notepad++</button>
            <button role="menuitem"><svg class="icon16" viewBox="0 0 16 16"><path d="M.5 5v9.500h11V11" fill="none" stroke="#222" /><path d="M9 2l5 4-5 4V7.500Q5 7 3 10.500 3.500 5 9 4.500z" fill="none" stroke="#222" /></svg>Share</button>
            <button role="menuitem"><span></span>Open with<svg class="more"><use href="#more" /></svg></button>
            <hr>
            <button role="menuitem"><span></span>Give access to<svg class="more"><use href="#more" /></svg></button>
            <button role="menuitem"><span></span>Restore previous versions</button>
            <hr>
            <button role="menuitem"><span></span>Send to<svg class="more"><use href="#more" /></svg></button>
            <hr>
            <button role="menuitem"><span></span>Cut</button>
            <button role="menuitem"><span></span>Copy</button>
            <hr>
            <button role="menuitem"><span></span>Create shortcut</button>
            <button role="menuitem"><span></span>Delete</button>
            <button role="menuitem"><span></span>Rename</button>
            <hr>
            <button role="menuitem"><span></span>Properties</button>
        </div>

        <div class="watermark">
            <span>ANY</span>
            <svg width="56" height="64" viewBox="0 0 56 64"><path d="M18 54L6 60V4l46 27-34 20" fill="none" stroke="#fff" stroke-width="6" /><path d="M15 2v50M18 20l22 12-22 13" fill="none" stroke="#fff" stroke-width="4" /></svg>
            <span>RUN</span>
        </div>
    </div>

    <div class="taskbar">
        <button aria-label="Start"><svg width="16" height="16" viewBox="0 0 16 16"><path d="M0 2l7-1v6.500H0zM8 1l8-1v7.500H8zM0 8.500h7V15l-7-1zM8 8.500h8V16l-8-1z" fill="#fff" /></svg></button>
        <div class="taskSearch">
            <svg width="16" height="16" viewBox="0 0 16 16"><circle cx="10" cy="6" r="5.300" fill="none" stroke="#222" stroke-width="1.300" /><path d="M6 10l-5.500 5.500" stroke="#222" stroke-width="1.300" /></svg>
            <input type="text" placeholder="Type here to search" aria-label="Type here to search" />
            <svg width="72" height="36" viewBox="0 0 72 36">
                <path d="M3 15Q3 7 11 4 14 0 21 1q4 2 7 0 6 0 5 6-3 7-10 8-2 7-12 8-7 1-8-8z" fill="#e9b678" />
                <path d="M9 12Q11 2 20 3q6 3 3 9-6 1-12 7-3-2-2-7z" fill="#f8dcab" />
                <path d="M8 12q6-7 15 1" fill="none" stroke="#e0607a" stroke-width="3" />
                <path d="M12 20l13 10M21 15l-1 8 8 6" fill="none" stroke="#e0607a" stroke-width="2" />
                <path d="M2 17l4 1 2-4 3 4 5 0-3 4 2 5-5-2-4 3v-5l-5-2z" fill="#ee7d92" />
                <path d="M22 28l5 1 5-3-1 4 2 4-6-2-4 3z" fill="#d8405e" />
                <path d="M41 5q10-5 22 0l-2 17q-9 4-18 0z" fill="#5d548c" /><path d="M41 5q10-5 22 0-11 4-22 0z" fill="#8a80b8" />
                <path d="M42 17q9 4 19 0v6q-9 4-18 0z" fill="#2f2850" />
                <path d="M36 22q3-1 7 2 9 3 18-1 5-4 9-2-1 7-13 9-17 3-21-8z" fill="#776bab" />
            </svg>
        </div>
        <button class="taskView" aria-label="Task View"><svg width="16" height="16" viewBox="0 0 16 16"><path d="M.5 0v2.500h9V0M.5 16v-2.500h9V16M.5 4.500h9v7h-9zM13.500 0v16" fill="none" stroke="#fff" stroke-width="1.200" /><rect x="12" y="5" width="3" height="3" fill="#fff" /></svg></button>
        <button aria-label="Microsoft Edge"><svg width="24" height="24"><use href="#edge" /></svg></button>
        <button class="active" aria-label="File Explorer"><svg width="22" height="20" viewBox="0 0 22 20"><path d="M0 1h8l2 2h12v15H0z" fill="#f9cf5b" /><path d="M0 1h8l2 2-2 2H0z" fill="#e0a430" /><path d="M5 19v-8h12v8h-3v-4H8v4z" fill="#3a98dc" /></svg></button>
        <button aria-label="Firefox"><svg width="24" height="24"><use href="#firefox" /></svg></button>

        <div class="tray">
            <button aria-label="Show hidden icons"><svg width="12" height="12" viewBox="0 0 12 12"><path d="M.5 9L6 3.500 11.500 9" fill="none" stroke="#fff" stroke-width="1.300" /></svg></button>
            <button aria-label="Meet Now"><svg width="16" height="16" viewBox="0 0 16 16"><path d="M4 2.500q4-3 8 0M4 13.500q4 3 8 0M3.500 5h7v6h-7zM10.500 7l3-1.500v5l-3-1.500" fill="none" stroke="#fff" stroke-width="1.200" /></svg></button>
            <button aria-label="Volume"><svg width="18" height="16" viewBox="0 0 18 16"><path d="M1 5.500h3l4-4v13l-4-4H1zM10 6q1.500 2 0 4M12 4q3 4 0 8M14.500 2.500q4 5.500 0 11" fill="none" stroke="#fff" /></svg></button>
            <button aria-label="Network"><svg width="16" height="16" viewBox="0 0 16 16"><path d="M5 3.500h10.500v8H4.500V6M9.500 11.500v3M6 14.500h7M.5 1.500h4v4h-4zM2.500 5.500v6" fill="none" stroke="#fff" /></svg></button>
            <div class="clock"><span>11:44 AM</span><span>12/21/2025</span></div>
            <button class="notify" aria-label="Notifications"><svg width="16" height="16" viewBox="0 0 16 16"><path d="M.5 1.500h15v11h-5L8 15l-2.500-2.500h-5z" fill="none" stroke="#fff" stroke-width="1.200" /></svg></button>
        </div>
    </div>

</body>

</html>
```

FILE: styles.css
```css
* {
    box-sizing: border-box;
}

body {
    margin: 0;
    height: 100vh;
    display: flex;
    flex-direction: column;
    overflow: hidden;
    font-family: "Open Sans", "Noto Sans", sans-serif;
    font-size: 11px;
    line-height: 14px;
    color: #000;
    background: radial-gradient(ellipse 70% 80% at 22% 85%, #00b2ff 20%, rgba(0, 160, 255, 0) 100%), linear-gradient(90deg, #009cf8 0%, #0090f2 20%, #0068dd 55%, #0048ca 85%, #0240c2 100%);
}

button {
    margin: 0;
    padding: 0;
    border: none;
    background: none;
    font: inherit;
    color: inherit;
}

input {
    border: none;
    outline: none;
    background: none;
    padding: 0;
    font: inherit;
    min-width: 0;
}

input::placeholder {
    color: #6d6d6d;
    opacity: 1;
}

a {
    color: inherit;
    text-decoration: none;
}

svg {
    flex: none;
}

.sprite {
    position: absolute;
    width: 0;
    height: 0;
}

.icon16 {
    width: 16px;
    height: 16px;
}

.icon48 {
    width: 48px;
    height: 48px;
}

.caret {
    width: 5px;
    height: 3px;
    margin-left: 2px;
    vertical-align: middle;
}

/* desktop */

.desktop {
    position: relative;
    flex: 1;
    min-height: 0;
}

.desktopIcons {
    display: grid;
    grid-auto-flow: column;
    grid-template-rows: repeat(7, 99px);
    grid-auto-columns: 74px;
    column-gap: 1px;
    justify-content: start;
    color: #fff;
    line-height: 15px;
    text-align: center;
    text-shadow: 0 1px 2px rgba(0, 0, 0, 0.6);
}

.desktopIcons a {
    display: flex;
    flex-direction: column;
    align-items: center;
    gap: 3px;
    padding-top: 7px;
}

.desktopIcons .longName span {
    align-self: flex-start;
    padding-left: 4px;
    white-space: nowrap;
}

.buildInfo {
    position: absolute;
    right: 4px;
    bottom: 0;
    color: #fff;
    text-align: right;
    line-height: 17px;
}

.buildInfo p {
    margin: 0;
}

/* window */

.window {
    position: absolute;
    left: 128px;
    top: 74px;
    right: 108px;
    bottom: 61px;
    display: flex;
    flex-direction: column;
    background: #fff;
}

.titleBar {
    display: flex;
    height: 31px;
}

.quickAccess {
    display: flex;
    align-items: center;
    gap: 8px;
    width: 229px;
    padding-left: 8px;
}

.quickAccess i {
    width: 1px;
    height: 12px;
    background: #999;
}

.quickAccess button {
    display: flex;
}

.contextTab {
    width: 159px;
    margin-top: 4px;
    line-height: 27px;
    text-align: center;
    color: #444;
    background: #fcc4de;
}

.title {
    flex: 1;
    padding-left: 13px;
    line-height: 31px;
}

.controls {
    display: flex;
    padding-right: 1px;
}

.controls button {
    width: 46px;
}

.tabs {
    display: flex;
    height: 24px;
    border-bottom: 1px solid #dadbdc;
}

.tabs > button {
    width: 58px;
    color: #333;
}

.tabs .file {
    width: 56px;
    color: #fff;
    background: #0063b1;
}

.tabs .home {
    margin-bottom: -1px;
    border: 1px solid #dadbdc;
    border-bottom: none;
    background: #f5f6f7;
}

.tabs > .view {
    width: 57px;
}

.tabs > .tools {
    width: 159px;
    border: 1px solid #e4e4e4;
    border-width: 0 1px;
}

.help {
    display: flex;
    align-items: center;
    gap: 9px;
    margin-left: auto;
    padding-right: 4px;
}

.help button {
    width: 16px;
    height: 16px;
    border-radius: 50%;
    line-height: 16px;
    font-weight: bold;
    color: #fff;
    background: #0868c8;
}

/* ribbon */

.ribbon {
    display: flex;
    height: 92px;
    color: #333;
    background: #f5f6f7;
    border-bottom: 1px solid #dadbdc;
}

.group {
    display: flex;
    flex-direction: column;
    margin: 2px 0;
    border-right: 1px solid #e0e1e2;
}

.group h2 {
    margin: auto 0 0;
    padding-right: 4px;
    line-height: 14px;
    font-size: 11px;
    font-weight: normal;
    text-align: center;
    color: #555;
}

.group .tools {
    display: flex;
    padding: 2px 0 0 4px;
}

.group i {
    width: 1px;
    margin: 0 4px;
    background: #e0e1e2;
}

.clipboard {
    width: 263px;
}

.organize {
    width: 191px;
}

.new {
    width: 145px;
}

.open {
    width: 133px;
}

.select {
    width: 115px;
}

.big {
    display: flex;
    flex-direction: column;
    align-items: center;
    gap: 5px;
    width: 42px;
    padding-top: 2px;
    line-height: 13px;
}

.pin {
    width: 70px;
}

.copy {
    width: 38px;
}

.paste,
.rename {
    width: 46px;
}

.delete {
    width: 40px;
}

.newFolder {
    width: 40px;
}

.props {
    width: 56px;
}

.off {
    color: #838383;
}

.col {
    display: flex;
    flex-direction: column;
    padding-left: 3px;
}

.col button {
    display: flex;
    align-items: center;
    gap: 3px;
    height: 22px;
    white-space: nowrap;
}

/* address */

.addressRow {
    display: flex;
    align-items: center;
    height: 35px;
    padding: 0 13px;
    color: #666;
}

.addressRow > button {
    display: flex;
    width: 12px;
    margin-right: 18px;
}

.addressRow .recent {
    width: 8px;
    margin: 0 10px 0 -4px;
}

.addressRow .up {
    margin-right: 7px;
}

.address {
    display: flex;
    align-items: center;
    flex: 1;
    gap: 7px;
    height: 22px;
    padding-left: 2px;
    border: 1px solid #d9d9d9;
    color: #000;
}

.address .history {
    display: flex;
    margin: 0 -5px 0 auto;
    color: #555;
}

.address .refresh {
    display: flex;
    align-items: center;
    align-self: stretch;
    padding: 0 2px;
    border-left: 1px solid #d9d9d9;
}

.search {
    display: flex;
    align-items: center;
    width: 202px;
    height: 22px;
    margin-left: 12px;
    padding: 0 8px;
    border: 1px solid #d9d9d9;
}

.search input {
    flex: 1;
}

/* navigation pane */

.content {
    display: flex;
    flex: 1;
    min-height: 0;
}

.nav {
    display: flex;
    width: 156px;
}

.nav ul {
    flex: 1;
    margin: 0;
    padding: 0;
    list-style: none;
}

.nav a {
    display: flex;
    align-items: center;
    gap: 5px;
    height: 24px;
    padding-left: 32px;
    white-space: nowrap;
}

.nav .sub a {
    padding-left: 40px;
}

.nav .current {
    background: #d9d9d9;
}

.scrollbar {
    display: flex;
    flex-direction: column;
    align-items: center;
    width: 17px;
    padding: 4px 0;
    background: #f0f0f0;
    color: #444;
}

.scrollbar .before {
    flex: 158;
}

.scrollbar .thumb {
    flex: 119;
    width: 15px;
    background: #cdcdcd;
}

.scrollbar .after {
    flex: 83;
}

/* file list */

.files {
    flex: 1;
    padding: 0 8px;
}

.files table {
    width: 100%;
    table-layout: fixed;
    border-collapse: collapse;
    color: #6d6d6d;
}

.cEdge {
    width: 10px;
}

.cName {
    width: 257px;
}

.cDate {
    width: 144px;
}

.cType {
    width: 120px;
}

.cSize {
    width: 80px;
}

.files th {
    position: relative;
    height: 27px;
    padding: 0 0 0 6px;
    border-left: 1px solid #e5e5e5;
    font-weight: normal;
    text-align: left;
    color: #4c607a;
}

.files th:first-child,
.files th.name {
    padding-left: 3px;
    border-left: none;
}

.sorted svg {
    position: absolute;
    left: 50%;
    top: -2px;
    margin-left: -5px;
}

.files td {
    height: 21px;
    padding: 0 0 0 7px;
    white-space: nowrap;
}

.files td.name {
    padding-left: 4px;
    color: #000;
}

.files td.name div {
    display: flex;
    align-items: center;
    gap: 4px;
}

.selected td + td:not(.last) {
    background: #cce8ff;
    box-shadow: inset 0 1px #99d1ff, inset 0 -1px #99d1ff;
}

.files .groupRow td {
    height: 32px;
    padding: 0 0 0 1px;
}

.groupRow div {
    display: flex;
    align-items: center;
    gap: 4px;
    font-size: 15px;
    line-height: 20px;
    color: #1e3287;
}

.groupRow hr {
    flex: 1;
    height: 1px;
    margin: 0 0 0 4px;
    border: none;
    background: #dfdfdf;
}

/* status bar */

.status {
    display: flex;
    align-items: center;
    gap: 21px;
    height: 23px;
    padding: 0 5px 0 14px;
    color: #1e395b;
}

.status .size {
    margin-left: -14px;
}

.views {
    display: flex;
    margin-left: auto;
}

.views button {
    display: flex;
    align-items: center;
    justify-content: center;
    width: 22px;
    height: 22px;
}

.views .on {
    background: #cce8ff;
    border: 1px solid #4cb5dc;
}

/* context menu */

.menu {
    position: absolute;
    left: 805px;
    top: 309px;
    width: 246px;
    padding: 4px 0;
    background: #eee;
    border: 1px solid #a0a0a0;
}

.menu button {
    display: flex;
    align-items: center;
    gap: 8px;
    width: 100%;
    height: 22px;
    padding: 0 10px;
}

.menu button span {
    width: 16px;
}

.menu .default {
    font-weight: bold;
}

.menu hr {
    height: 1px;
    margin: 3px 10px;
    border: none;
    background: #919191;
}

.menu .more {
    width: 8px;
    height: 14px;
    margin-left: auto;
}

.watermark {
    position: absolute;
    right: 47px;
    bottom: 6px;
    display: flex;
    align-items: center;
    gap: 6px;
    font-family: "Liberation Sans", sans-serif;
    font-size: 30px;
    line-height: 36px;
    color: #fff;
    opacity: 0.45;
    pointer-events: none;
}

/* taskbar */

.taskbar {
    display: flex;
    height: 40px;
    color: #fff;
    background: linear-gradient(90deg, #03151f, #02101c 50%, #000813);
}

.taskbar > button {
    display: flex;
    align-items: center;
    justify-content: center;
    width: 48px;
    margin-right: 1px;
}

.taskbar > button:first-child {
    margin-right: 0;
}

.taskbar .taskView {
    margin-right: 3px;
}

.taskbar .active {
    background: #2f4550;
    border-bottom: 2px solid #76b9ed;
}

.taskSearch {
    display: flex;
    align-items: center;
    width: 288px;
    padding: 0 4px 0 12px;
    background: #f2f2f2;
}

.taskSearch input {
    flex: 1;
    padding-left: 12px;
    font-size: 14px;
    line-height: 20px;
}

.taskSearch input::placeholder {
    color: #333;
}

.tray {
    display: flex;
    align-items: center;
    gap: 2px;
    margin-left: auto;
    padding-right: 4px;
}

.tray button {
    display: flex;
    justify-content: center;
    width: 22px;
}

.clock {
    display: flex;
    flex-direction: column;
    width: 62px;
    line-height: 18px;
    text-align: center;
}

.tray .notify {
    align-items: center;
    align-self: stretch;
    width: 48px;
    padding-right: 10px;
    border-right: 1px solid #4b545c;
}
```
